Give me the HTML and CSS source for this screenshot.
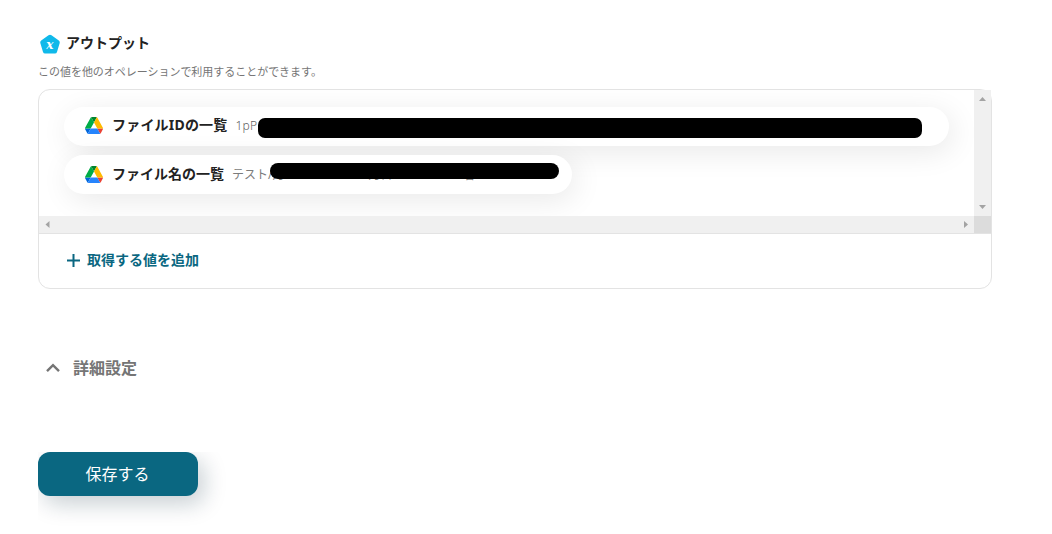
FILE: index.html
```html
<!DOCTYPE html>
<html lang="ja">
<head>
  <meta charset="UTF-8" />
  <title>アウトプット</title>
  <meta name="viewport" content="width=device-width, initial-scale=1.0" />
  <link rel="stylesheet" href="styles.css">
</head>

<body>
  <svg class="defs" width="0" height="0" aria-hidden="true">
    <symbol id="drive" viewBox="0 0 87.3 78" preserveAspectRatio="none">
      <path d="m6.6 66.85 3.85 6.65c.8 1.4 1.95 2.5 3.3 3.3l13.75-23.8h-27.5c0 1.55.4 3.1 1.2 4.5z" fill="#0066da"/>
      <path d="m43.65 25-13.75-23.8c-1.35.8-2.5 1.9-3.3 3.3l-25.4 44a9.06 9.06 0 0 0 -1.2 4.5h27.5z" fill="#00ac47"/>
      <path d="m73.55 76.8c1.35-.8 2.5-1.9 3.3-3.3l1.6-2.75 7.65-13.25c.8-1.4 1.2-2.95 1.2-4.5h-27.5l5.85 11.5z" fill="#ea4335"/>
      <path d="m43.65 25 13.75-23.8c-1.35-.8-2.9-1.2-4.5-1.2h-18.5c-1.6 0-3.15.45-4.5 1.2z" fill="#00832d"/>
      <path d="m59.8 53h-32.3l-13.75 23.8c1.35.8 2.9 1.2 4.5 1.2h50.8c1.6 0 3.15-.45 4.5-1.2z" fill="#2684fc"/>
      <path d="m73.4 26.5-12.7-22c-.8-1.4-1.95-2.5-3.3-3.3l-13.75 23.8 16.15 28h27.45c0-1.55-.4-3.1-1.2-4.5z" fill="#ffba00"/>
    </symbol>
  </svg>

  <div class="container">
    <h2 class="title">
      <svg class="title-icon" width="22" height="20" viewBox="0 0 22 20">
        <path d="M9.5 1.2Q11 .2 12.5 1.2L19.8 6.4Q21.2 7.4 20.7 9L18 17.9Q17.5 19.4 15.9 19.4H6.1Q4.5 19.4 4 17.9L1.3 9Q.8 7.4 2.2 6.4Z" fill="#10b9ea"/>
        <text class="title-icon-x" x="10.8" y="14.6" text-anchor="middle">x</text>
      </svg>
      アウトプット
    </h2>
    <p class="description">この値を他のオペレーションで利用することができます。</p>

    <div class="card">
      <div class="viewport">
        <div class="outputs">
          <div class="pill pill-wide">
            <svg class="drive drive-id"><use href="#drive"/></svg>
            <span class="name name-id">ファイルIDの一覧</span>
            <span class="value value-id">1pP</span>
            <span class="mask mask-id"></span>
          </div>
          <div class="pill pill-short">
            <svg class="drive"><use href="#drive"/></svg>
            <span class="name">ファイル名の一覧</span>
            <span class="value">テスト/月</span>
            <span class="value value-mid">月日</span>
            <span class="value value-end">名</span>
            <span class="mask mask-name"></span>
          </div>
        </div>
        <div class="scroll-y">
          <svg width="17" height="17" viewBox="0 0 17 17"><path d="M5 11 8.5 7 12 11Z" fill="#a3a3a3"/></svg>
          <svg width="17" height="17" viewBox="0 0 17 17"><path d="M5 6 8.5 10 12 6Z" fill="#a3a3a3"/></svg>
        </div>
        <div class="scroll-x">
          <svg width="17" height="17" viewBox="0 0 17 17"><path d="M10.5 5 6.5 8.5 10.5 12Z" fill="#a3a3a3"/></svg>
          <svg width="17" height="17" viewBox="0 0 17 17"><path d="M7 5 11 8.5 7 12Z" fill="#a3a3a3"/></svg>
        </div>
        <div class="scroll-corner"></div>
      </div>
      <button class="add">
        <svg width="13" height="13" viewBox="0 0 13 13"><path d="M6.5 0V13M0 6.5H13" stroke="#0a6781" stroke-width="2"/></svg>
        <span class="add-label">取得する値を追加</span>
      </button>
    </div>

    <div class="details">
      <svg width="14" height="10" viewBox="0 0 14 10"><path d="M1 8.2 7 2.2 13 8.2" fill="none" stroke="#757575" stroke-width="2.4"/></svg>
      <span class="details-label">詳細設定</span>
    </div>

    <div class="actions">
      <button class="save">保存する</button>
    </div>
  </div>
</body>
</html>
```

FILE: styles.css
```css
* {
  box-sizing: border-box;
}

body {
  margin: 0;
  background: #fff;
  color: #222;
  font-family: "Noto Sans", "Noto Sans CJK JP", sans-serif;
}

button {
  border: none;
  background: none;
  padding: 0;
  font-family: inherit;
  cursor: pointer;
}

.defs {
  display: block;
}

.container {
  width: 954px;
  margin-left: 38px;
  padding-top: 33px;
}

.title {
  display: flex;
  align-items: center;
  gap: 5px;
  height: 20px;
  margin: 0;
  padding-left: 1px;
  font-size: 14px;
  line-height: 20px;
}

.title-icon {
  position: relative;
  top: 1px;
}

.title-icon-x {
  font-family: "DejaVu Serif", serif;
  font-size: 12px;
  font-style: italic;
  font-weight: 700;
  fill: #fff;
}

.description {
  height: 16px;
  margin: 11px 0 9px;
  font-size: 11px;
  line-height: 16px;
  letter-spacing: -0.03px;
  color: #757575;
}

.card {
  height: 200px;
  border: 1px solid #e3e3e3;
  border-radius: 12px;
}

.viewport {
  display: grid;
  grid-template-columns: 1fr 17px;
  grid-template-rows: 126px 17px;
  border-bottom: 1px solid #e3e3e3;
}

.outputs {
  display: flex;
  flex-direction: column;
  align-items: flex-start;
  gap: 9px;
  padding: 17px 25px;
  overflow: hidden;
  border-radius: 11px 0 0 0;
}

.pill {
  position: relative;
  display: flex;
  flex-shrink: 0;
  align-items: center;
  height: 39px;
  padding: 0 20px 2px 21px;
  border-radius: 20px;
  background: #fff;
  box-shadow: 4px 6px 30px rgba(0, 0, 0, 0.09);
  white-space: nowrap;
}

.pill-wide {
  width: 885px;
}

.pill-short {
  width: 508px;
}

.drive {
  width: 18px;
  height: 17px;
  margin-top: 2px;
}

.drive-id {
  margin-top: 0;
}

.name {
  margin-left: 9px;
  padding-bottom: 1px;
  font-size: 14px;
  font-weight: 700;
}

.name-id {
  padding-bottom: 3px;
  letter-spacing: 0.2px;
}

.value {
  margin-left: 8px;
  font-size: 12px;
  font-weight: 400;
  color: #7c7c7c;
}

.value-id {
  font-weight: 300;
  letter-spacing: 0.2px;
  color: #5f5f5f;
}

.value-mid {
  margin-left: 84px;
}

.value-end {
  margin-left: 70px;
}

.mask {
  position: absolute;
  background: #000;
}

.mask-id {
  left: 194px;
  top: 11px;
  width: 664px;
  height: 20px;
  border-radius: 7px;
}

.mask-name {
  left: 206px;
  top: 8px;
  width: 289px;
  height: 16px;
  border-radius: 8px;
}

.scroll-y,
.scroll-x {
  display: flex;
  justify-content: space-between;
  background: #f0f0f0;
}

.scroll-y {
  flex-direction: column;
}

.scroll-corner {
  background: #dcdcdc;
}

.add {
  display: flex;
  align-items: center;
  gap: 7px;
  height: 52px;
  padding-left: 28px;
  font-size: 14px;
  font-weight: 700;
  color: #0a6781;
}

.add-label,
.details-label {
  padding-bottom: 2px;
}

.details {
  display: flex;
  align-items: center;
  gap: 13px;
  height: 24px;
  margin-top: 67px;
  padding-left: 8px;
  font-size: 16px;
  font-weight: 700;
  color: #757575;
}

.actions {
  width: 190px;
  height: 75px;
  margin-top: 72px;
  overflow: hidden;
}

.save {
  width: 160px;
  height: 44px;
  padding: 0 1px 2px 0;
  border-radius: 12px;
  background: #0a6781;
  box-shadow: 6px 8px 22px rgba(10, 40, 60, 0.22);
  color: #fff;
  font-size: 16px;
}
```
